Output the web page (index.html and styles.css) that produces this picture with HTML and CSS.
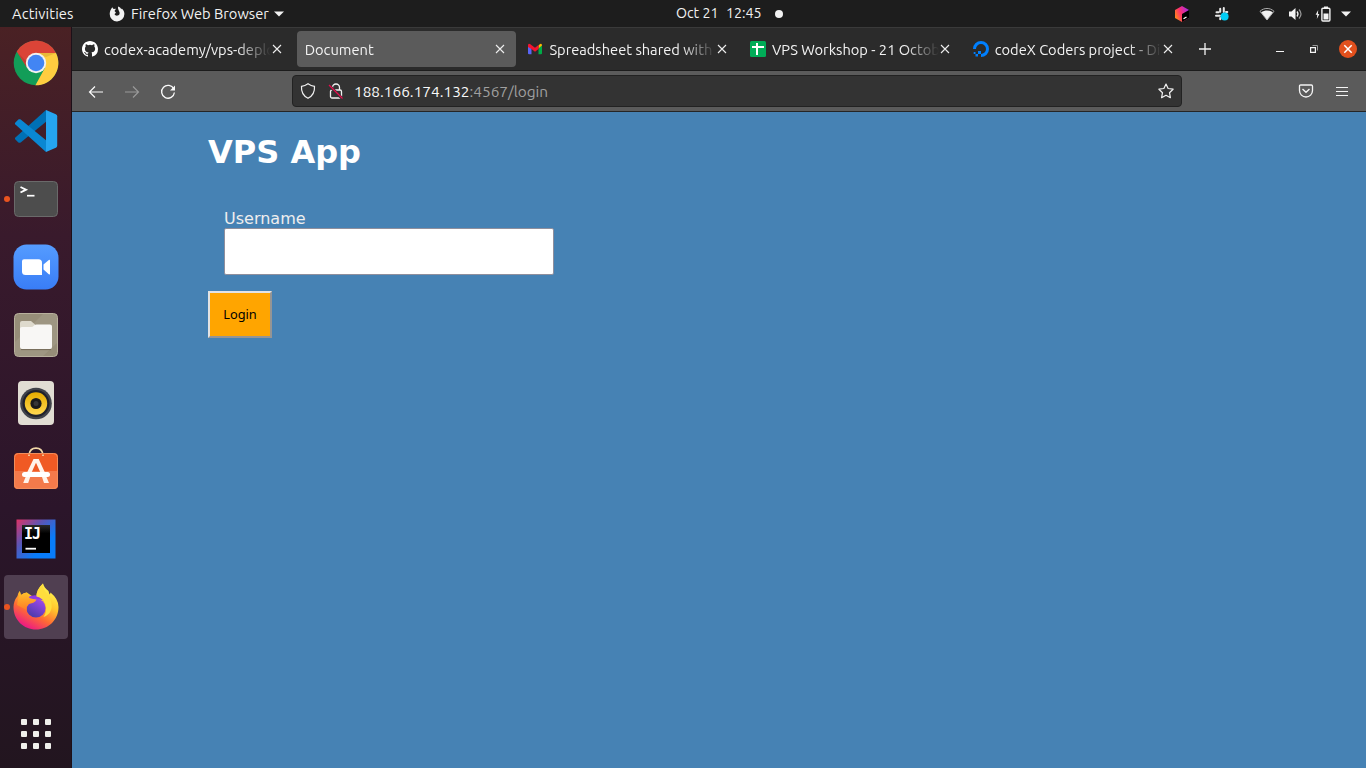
FILE: index.html
```html
<!DOCTYPE html>
<html lang="en">
<head>
<meta charset="utf-8">
<title>Document</title>
<link rel="stylesheet" href="styles.css">
</head>
<body>
<header class="panel">
  <span class="activities">Activities</span>
  <span class="appmenu">
    <svg width="16" height="16" viewBox="0 0 16 16"><path d="M3.200 1.200 4.600 3 7 2.800 5.500 5 7 6.800 5.500 8c.5 1.500 2 2 3.300 1.600C10.500 9 11 7.500 10.400 6 10 4.800 8.800 3.500 9 .6c1.700.6 2.700 1.400 3.200 2.700l.6-.8c1.700 1.500 2.600 3.500 2.600 5.600A7.300 7.300 0 0 1 .7 8c0-2.600 1-4.300 2.500-6.800z" fill="#f2f2f2"/></svg>
    <span class="appname">Firefox Web Browser</span>
    <svg width="10" height="6" viewBox="0 0 10 6"><path d="M0 .5h10L5 5.500z" fill="#f2f2f2"/></svg>
  </span>
  <span class="clock"><span class="date">Oct 21</span><span class="time">12:45</span><i class="dot"></i></span>
  <span class="tray">
    <svg class="t-jet" width="16" height="16" viewBox="0 0 16 16"><defs><linearGradient id="jb" x1="0" y1=".7" x2="1" y2=".2"><stop offset="0" stop-color="#ff8a18"/><stop offset=".45" stop-color="#ff2d72"/><stop offset="1" stop-color="#9b2bf0"/></linearGradient></defs><path d="m8 0 7 4v8l-7 4-7-4V4z" fill="url(#jb)"/><path d="m8 8 7-4v8l-7 4z" fill="#000"/><path d="m9.500 12.700 3-1.700" stroke="#fff" stroke-width="1.200"/></svg>
    <svg class="t-slack" width="16" height="16" viewBox="0 0 16 16"><g stroke="#e8e8e8" stroke-width="2" stroke-linecap="round"><path d="M6.200 5.700V2.800M2.500 6.200h2M9.800 2v4M12 6h1.300M2 9.800h4M6.200 12v1.300"/></g><circle cx="10.600" cy="10.600" r="4" fill="#00cdf5"/></svg>
    <svg class="t-wifi" width="16" height="14" viewBox="0 0 16 14"><path d="M1 4.300C5 .5 11 .5 15 4.300L8 13z" fill="none" stroke="#aaa" stroke-width="1"/><path d="M2.200 5.300c3.500-2.500 8.100-2.500 11.600 0L8 12.800z" fill="#f2f2f2"/></svg>
    <svg class="t-vol" width="15" height="14" viewBox="0 0 15 14"><path d="M1 4.500h2.500L7.500 1v12L3.500 9.500H1z" fill="#f2f2f2"/><path d="M9 4.500q2 2.500 0 5" fill="none" stroke="#eee" stroke-width="1.300"/><path d="M11 2.500q4 4.500 0 9" fill="none" stroke="#999" stroke-width="1.200"/></svg>
    <svg class="t-bat" width="16" height="16" viewBox="0 0 16 16"><path d="M3.200 4 .6 8.800h1.700L1.800 13l2.600-5H2.900z" fill="#f2f2f2"/><path d="M9 2V.5h4V2" fill="#f2f2f2"/><rect x="6.900" y="2.200" width="8" height="12.800" rx="1" fill="none" stroke="#f2f2f2" stroke-width="1.400"/><path d="M8.500 7.500h5V13.500h-5z" fill="#f2f2f2"/></svg>
    <svg class="t-arrow" width="10" height="6" viewBox="0 0 10 6"><path d="M0 .5h10L5 5.500z" fill="#f2f2f2"/></svg>
  </span>
</header>
<div class="desktop">
<nav class="dock">
  <span class="app"><svg width="48" height="48" viewBox="0 0 48 48"><circle cx="24" cy="24" r="22.300" fill="#129d58"/><path d="M4.700 12.600A22.300 22.300 0 0 1 44 14H24L15.100 29z" fill="#db4437"/><path d="M24 14h20a22.300 22.300 0 0 1-20.600 32.300L32.900 29z" fill="#ffcd40"/><path d="m6 14 8 13 1-4z" fill="#a23029" opacity=".4"/><path d="M24 14h20l-10 4z" fill="#c9982a" opacity=".4"/><circle cx="24" cy="24" r="10.200" fill="#f1f1f1"/><circle cx="24" cy="24" r="8.300" fill="#4285f4"/></svg></span>
  <span class="app"><svg width="48" height="48" viewBox="0 0 48 48"><path d="M3.400 30.500c-.7.700-.6 1.400 0 2l3 2.900c.7.600 1.500.6 2.300 0L34 14.700V3z" fill="#0070b5"/><path d="M3.400 17.500c-.7-.7-.6-1.400 0-2l3-2.900c.7-.6 1.500-.6 2.300 0L34 33.300V45z" fill="#0a87d2"/><path d="m34 3 9.800 4.300q1.400.7 1.400 2v29.400q0 1.300-1.400 2L34 45z" fill="#25a5f0"/></svg></span>
  <span class="app"><i class="running"></i><svg width="48" height="48" viewBox="0 0 48 48"><rect x="2.500" y="6.500" width="43" height="35" rx="4" fill="#4d4d4d" stroke="#6a6a6a"/><path d="m8.500 12 5.500 2.700-5.500 2.800" fill="none" stroke="#fff" stroke-width="1.900"/><path d="M15 20.700h7.500" stroke="#fff" stroke-width="1.700"/></svg></span>
  <span class="app"><svg width="48" height="48" viewBox="0 0 48 48"><defs><linearGradient id="zm" x2="0" y2="1"><stop stop-color="#559cff"/><stop offset="1" stop-color="#397df6"/></linearGradient></defs><rect x="1.500" y="1.500" width="45" height="45" rx="13" fill="url(#zm)"/><path d="M12 16.200h14.500q3.500 0 3.500 3.500V32H13.500Q10 32 10 28.500v-10.300q0-2 2-2z" fill="#fff"/><path d="M31.500 21.600 36.800 17q1.200-.8 1.200.6v13q0 1.400-1.200.6l-5.300-4.600z" fill="#fff"/></svg></span>
  <span class="app"><svg width="48" height="48" viewBox="0 0 48 48"><rect x="2.500" y="2.500" width="43" height="43" rx="4" fill="#968d78" stroke="#b8b09d"/><path d="M3 31 31 3h11q3 0 3 3v26L31 45H3z" fill="#a9a18d" opacity=".45"/><path d="M8 14v-2q0-2 2-2h9l4 3.500V20H8z" fill="#dedacd"/><path d="M8 17.500q0-1.500 2-1.500h9q2 0 3-1.500 1-1 2.500-1H38q2 0 2 2V36q0 2-2 2H10q-2 0-2-2z" fill="#f8f7f5"/><path d="M9 38.600h30" stroke="#756c59"/></svg></span>
  <span class="app"><svg width="48" height="48" viewBox="0 0 48 48"><defs><linearGradient id="sp" x2="0" y2="1"><stop stop-color="#e5ac00"/><stop offset="1" stop-color="#ffd84f"/></linearGradient></defs><rect x="6" y="2" width="36" height="44" rx="4" fill="#e1ddd3"/><circle cx="24" cy="24.500" r="15.800" fill="#41434a"/><circle cx="24" cy="24.500" r="13.500" fill="#20222b"/><circle cx="24" cy="24.500" r="11.200" fill="url(#sp)"/><circle cx="24" cy="24.500" r="5.600" fill="#1b1b1b"/><circle cx="24" cy="24.500" r="2.500" fill="#373737"/></svg></span>
  <span class="app"><svg width="48" height="48" viewBox="0 0 48 48"><path d="M17 9V7.700q1-6.500 7-6.500t7 6.500V9" fill="none" stroke="#f2d8a7" stroke-width="1.700"/><rect x="2" y="6" width="44" height="36" rx="4" fill="#f05a24"/><path d="M2 24h44v14q0 4-4 4H6q-4 0-4-4z" fill="#f37a4b"/><rect x="2.500" y="6.500" width="43" height="35" rx="4" fill="none" stroke="#f18d5b"/><path d="M17 9V7.500M31 9V7.500" stroke="#f2d8a7" stroke-width="1.700"/><path d="M21.500 12h5.200l6 13h-4.500L24 15.800 19.800 25h-4.500zM13.600 30h4.600l-2 6h-5zM30 30h4.500l2.500 6h-5z" fill="#fff3ea"/><rect x="10" y="25" width="28" height="5" rx="2.500" fill="#fff"/></svg></span>
  <span class="app"><svg width="48" height="48" viewBox="0 0 48 48"><defs><linearGradient id="ij" x2=".7" y2=".7"><stop stop-color="#df3265"/><stop offset=".5" stop-color="#5c55b4"/><stop offset="1" stop-color="#087cfa"/></linearGradient><linearGradient id="ib" x2="0" y2="1"><stop stop-color="#2a2a2a"/><stop offset=".3" stop-color="#000"/></linearGradient></defs><path d="M4.500 4.500h39v39h-39z" fill="url(#ij)"/><path d="M10 10h28v28H10z" fill="url(#ib)"/><text class="ij" x="12" y="23.500">IJ</text><path d="M13.500 33.700H24" stroke="#fff" stroke-width="1.800"/></svg></span>
  <span class="app active"><i class="running"></i><svg width="48" height="48" viewBox="0 0 48 48"><defs><linearGradient id="f1" x1=".8" y1=".1" x2=".3" y2="1"><stop stop-color="#fff44f"/><stop offset=".35" stop-color="#ffc32b"/><stop offset=".65" stop-color="#ff6b34"/><stop offset="1" stop-color="#ea128b"/></linearGradient><linearGradient id="f2" x2="0" y2="1"><stop stop-color="#ffc52d"/><stop offset="1" stop-color="#ff7c25"/></linearGradient><linearGradient id="f3" x1=".8" x2=".2" y2="1"><stop stop-color="#a349f0"/><stop offset="1" stop-color="#453aa5"/></linearGradient></defs><path d="M5.500 13q.2-3 2.300-5l1 4q3-2.500 6-2.600L20 13l4 1q1-8 7-13.500 1 4 5.500 7.500l1 3.500q1-.8 1-2Q46.500 16 46.500 24c0 13-10.200 22.500-22.500 22.500S1.500 37 1.500 24q0-6 4-11z" fill="url(#f1)"/><path d="M14.500 15q5-3.500 10.500-2.600 5.500 1 8 5.600-4-2-7-1z" fill="#903ce3"/><circle cx="24" cy="25" r="9.600" fill="url(#f3)"/><path d="M7.800 8 9 12q3-2.300 6-2.400.3 3.500 3 6l6.500.8q-.5 2-3.200 3.300l-4.300 1.300q-2.500 2-2.300 6L5 22z" fill="url(#f2)"/><path d="M31 .5q-7 6.500-6.500 13Q31 15 33.500 21q2 7-2 13Q42 30 39 18q-1-4-4-7-4-4-4-10.500z" fill="#ffdd3d"/></svg></span>
  <span class="app grid"><i></i><i></i><i></i><i></i><i></i><i></i><i></i><i></i><i></i></span>
</nav>
<main class="window">
  <div class="tabs">
    <div class="tab"><svg class="fav" width="16" height="16" viewBox="0 0 16 16"><path fill="#fff" d="M8 0C3.580 0 0 3.580 0 8c0 3.540 2.290 6.530 5.470 7.590.4.070.55-.17.55-.38 0-.19-.01-.82-.01-1.490-2.010.37-2.530-.49-2.690-.94-.09-.23-.48-.94-.82-1.130-.28-.15-.68-.52-.01-.53.63-.01 1.080.58 1.230.82.72 1.210 1.870.87 2.330.66.070-.52.28-.87.51-1.070-1.780-.2-3.640-.89-3.640-3.950 0-.87.31-1.590.82-2.150-.08-.2-.36-1.020.08-2.120 0 0 .67-.21 2.200.82a7.500 7.500 0 0 1 4 0c1.530-1.040 2.200-.82 2.200-.82.44 1.100.16 1.920.08 2.120.51.56.82 1.270.82 2.150 0 3.070-1.870 3.750-3.650 3.950.29.25.54.73.54 1.480 0 1.070-.01 1.930-.01 2.200 0 .21.15.46.55.38A8.010 8.010 0 0 0 16 8c0-4.420-3.580-8-8-8z"/></svg><span class="title">codex-academy/vps-deplo</span><svg class="close" viewBox="0 0 10 10"><path d="m1 1 8 8M9 1 1 9"/></svg></div>
    <div class="tab selected"><span class="title">Document</span><svg class="close" viewBox="0 0 10 10"><path d="m1 1 8 8M9 1 1 9"/></svg></div>
    <div class="tab"><svg class="fav" width="16" height="16" viewBox="0 0 16 16"><path d="M1 4.500 4.500 7v6.300H2q-1 0-1-1z" fill="#5965f5"/><path d="M11.500 7 15 4.500v7.800q0 1-1 1h-2.500z" fill="#00ac47"/><path d="M11.500 4.500 13 3q2-1 2 1.500L11.500 7.500z" fill="#ffba00"/><path d="M1 6V4.200Q1 2 3 3l5 3.800L11.500 4v4L8 10.700 4.500 8z" fill="#f5142f"/></svg><span class="title">Spreadsheet shared with</span><svg class="close" viewBox="0 0 10 10"><path d="m1 1 8 8M9 1 1 9"/></svg></div>
    <div class="tab"><svg class="fav" width="16" height="16" viewBox="0 0 16 16"><rect width="16" height="16" rx="1.500" fill="#00ac57"/><path d="M2 6h12M7 2v12" stroke="#fff" stroke-width="2"/></svg><span class="title">VPS Workshop - 21 Octob</span><svg class="close" viewBox="0 0 10 10"><path d="m1 1 8 8M9 1 1 9"/></svg></div>
    <div class="tab"><svg class="fav" width="16" height="16" viewBox="0 0 16 16"><path d="M1.500 8A6.500 6.500 0 1 1 8 14.500" fill="none" stroke="#0080ff" stroke-width="3"/><path d="M5 10h3v3H5zM2.500 13H5v2.500H2.500zM.7 11h1.800v2H.7z" fill="#0080ff"/></svg><span class="title">codeX Coders project - Di</span><svg class="close" viewBox="0 0 10 10"><path d="m1 1 8 8M9 1 1 9"/></svg></div>
    <svg class="newtab" width="12" height="12" viewBox="0 0 12 12"><path d="M6 0v12M0 6h12" stroke="#f3f3f3" stroke-width="1.300"/></svg>
    <div class="controls">
      <svg width="8" height="8" viewBox="0 0 8 8"><path d="M0 6.500h8" stroke="#f5f5f5"/></svg>
      <svg width="8" height="8" viewBox="0 0 8 8"><path d="M.6 2.600h4.800v4.800H.6z" fill="none" stroke="#f5f5f5" stroke-width="1.200"/><path d="M2.500.5h5v5" fill="none" stroke="#999"/></svg>
      <span class="quit"><svg width="10" height="10" viewBox="0 0 10 10"><path d="m1.300 1.300 7.400 7.400m0-7.400L1.300 8.700" stroke="#fff" stroke-width="1.500"/></svg></span>
    </div>
  </div>
  <div class="toolbar">
    <div class="navs">
      <svg width="16" height="16" viewBox="0 0 16 16"><path d="M7 2.500 1.500 8 7 13.500M1.500 8H15" fill="none" stroke="#fbfbfb" stroke-width="1.200"/></svg>
      <svg width="16" height="16" viewBox="0 0 16 16"><path d="M9 2.500 14.500 8 9 13.500M14.500 8H1" fill="none" stroke="#999" stroke-width="1.200"/></svg>
      <svg width="16" height="16" viewBox="0 0 16 16"><path d="M13.800 5A6.400 6.400 0 1 0 14.400 8.500" fill="none" stroke="#fbfbfb" stroke-width="1.300"/><path d="M15 1.500V6.500H10z" fill="#fbfbfb"/></svg>
    </div>
    <div class="url">
      <svg width="16" height="16" viewBox="0 0 16 16"><path d="M8 .8q3 2.200 6.500 2.500.6 8.500-6.500 12Q.9 11.800 1.500 3.300 5 3 8 .8z" fill="none" stroke="#f1f1f1" stroke-width="1.200"/></svg>
      <svg class="lock" width="16" height="16" viewBox="0 0 16 16"><path d="M4.500 7V4.500a3.500 3.500 0 0 1 7 0V7" fill="none" stroke="#f1f1f1" stroke-width="1.300"/><rect x="2.500" y="7" width="11" height="8" rx="1.500" fill="none" stroke="#f1f1f1" stroke-width="1.300"/><path d="m.7 2 14 14" stroke="#333" stroke-width="3"/><path d="m1 2 13.500 13.500" stroke="#e80b4d" stroke-width="1.300"/></svg>
      <span class="addr"><b>188.166.174.132</b>:4567/login</span>
      <svg class="star" width="16" height="16" viewBox="0 0 16 16"><path d="m8 1 2.100 4.500 5 .7-3.600 3.500.9 5L8 12.300l-4.400 2.400.9-5L.9 6.200l5-.7z" fill="none" stroke="#f1f1f1" stroke-width="1.200" stroke-linejoin="round"/></svg>
    </div>
    <svg class="pocket" width="16" height="14" viewBox="0 0 16 14"><path d="M2.700 1h10.600q1.200 0 1.200 1.200V6.500a6.500 6.500 0 0 1-13 0V2.200Q1.500 1 2.700 1z" fill="none" stroke="#f4f4f4" stroke-width="1.300"/><path d="m4.500 5 3.500 3.200L11.500 5" fill="none" stroke="#f4f4f4" stroke-width="1.400"/></svg>
    <svg class="burger" width="12" height="9" viewBox="0 0 12 9"><path d="M0 .5h12M0 4.500h12M0 8.500h12" stroke="#f4f4f4"/></svg>
  </div>
  <section class="page">
    <h1>VPS App</h1>
    <form>
      <label class="field">Username<input type="text"></label>
      <button class="login" type="button">Login</button>
    </form>
  </section>
</main>
</div>
</body>
</html>
```

FILE: styles.css
```css
* { box-sizing: border-box; }
body { margin: 0; width: 1366px; height: 768px; overflow: hidden; background: #4682b4; font-family: Ubuntu, "Noto Sans", sans-serif; }
svg { display: block; flex: none; }

.panel { display: grid; grid-template-columns: 676px 1fr auto; grid-template-rows: 27px; align-items: center; height: 27px; background: #1d1d1d; color: #f2f2f2; font-size: 14.667px; line-height: 27px; white-space: nowrap; }
.panel > * { grid-row: 1; }
.activities { grid-column: 1; padding-left: 12px; letter-spacing: .15px; }
.appmenu { grid-column: 1; display: flex; align-items: center; padding-left: 109px; }
.appname { width: 138px; margin: 0 5px 0 6px; }
.clock { grid-column: 2; display: flex; align-items: center; font-size: 14.200px; }
.date { width: 50px; }
.time { width: 49px; }
.dot { width: 8px; height: 8px; border-radius: 50%; background: #f2f2f2; }
.tray { display: flex; align-items: center; padding-right: 15px; }
.t-slack { margin-left: 24px; }
.t-wifi { margin-left: 29px; }
.t-vol { margin-left: 13px; }
.t-bat { margin-left: 12px; }
.t-arrow { margin-left: 10px; }

.desktop { display: flex; height: 741px; }
.dock { display: flex; flex-direction: column; gap: 4px; width: 72px; padding: 4px 4px 2px; background: linear-gradient(#4a2124, #391a2c 28%, #2b152a 65%, #22151f); border-right: 1px solid #1c1018; }
.app { position: relative; flex: none; display: flex; align-items: center; justify-content: center; width: 64px; height: 64px; border-radius: 4px; }
.app.active { background: #503f51; }
.running { position: absolute; left: 0; top: 29px; width: 6px; height: 6px; border-radius: 50%; background: #e95420; }
.app.grid { display: grid; grid-template-columns: repeat(3, 6px); grid-auto-rows: 6px; gap: 6px; align-content: center; align-items: stretch; margin-top: auto; }
.grid i { border-radius: 1px; background: #efefeb; }
.ij { font: bold 15px "DejaVu Sans Mono", monospace; fill: #fff; letter-spacing: -1px; }

.window { flex: 1; display: flex; flex-direction: column; min-width: 0; }
.tabs { display: flex; align-items: center; height: 44px; padding-left: 2px; background: #2b2b2b; border-top: 1px solid #3a3a3a; border-bottom: 1px solid #1c1c1c; }
.tab { display: flex; flex: none; align-items: center; width: 219px; height: 36px; margin-right: 3.700px; padding: 0 11px 0 8px; border-radius: 4px; color: #f3f3f3; font-size: 14.667px; }
.tab.selected { background: #5b5b5b; }
.fav { margin-right: 6px; }
.title { flex: 1; min-width: 0; margin-right: 1px; padding-top: 1px; white-space: nowrap; -webkit-mask-image: linear-gradient(90deg, #000 calc(100% - 34px), transparent); mask-image: linear-gradient(90deg, #000 calc(100% - 34px), transparent); }
.close { width: 10px; height: 10px; stroke: #eee; stroke-width: 1.100; fill: none; }
.newtab { margin-left: 12px; }
.controls { display: flex; align-items: center; margin-left: auto; padding-right: 9px; gap: 26px; }
.quit { display: grid; place-items: center; width: 18px; height: 18px; margin-left: -5px; border-radius: 50%; background: #e2501d; }

.toolbar { display: flex; align-items: center; height: 41px; background: #5b5b5b; border-bottom: 1px solid #252525; }
.navs { display: flex; gap: 20px; width: 220px; padding: 1px 0 0 16px; }
.url { display: flex; align-items: center; width: 890px; height: 32px; padding: 0 7px; background: #333; border: 1px solid #222; border-radius: 4px; }
.lock { margin-left: 12px; }
.addr { margin-left: 10px; color: #a0a0a0; font-size: 15.400px; }
.addr b { color: #fafafa; font-weight: 400; }
.star { margin-left: auto; }
.pocket { margin-left: 116px; }
.burger { margin-left: 22px; }

.page { flex: 1; padding: 21px 0 0 136px; background: #4682b4; color: #fff; font-family: "DejaVu Sans", sans-serif; }
.page h1 { margin: 0; font-size: 32px; line-height: 38px; }
.field { display: block; width: 330px; margin: 38px 0 0 16px; font-size: 16px; line-height: 19px; color: #eee; }
.field input { display: block; width: 330px; height: 47px; margin: 0; padding: 0 12px; border: 1px solid #8f8f9d; border-radius: 2px; background: #fff; }
.login { display: block; width: 64px; height: 47px; margin-top: 16px; padding: 0 0 2px; background: orange; color: #000; border: 2px solid; border-color: #e3e3e3 #959595 #959595 #e3e3e3; border-radius: 0; font: 12.800px "Noto Sans", sans-serif; }
```
